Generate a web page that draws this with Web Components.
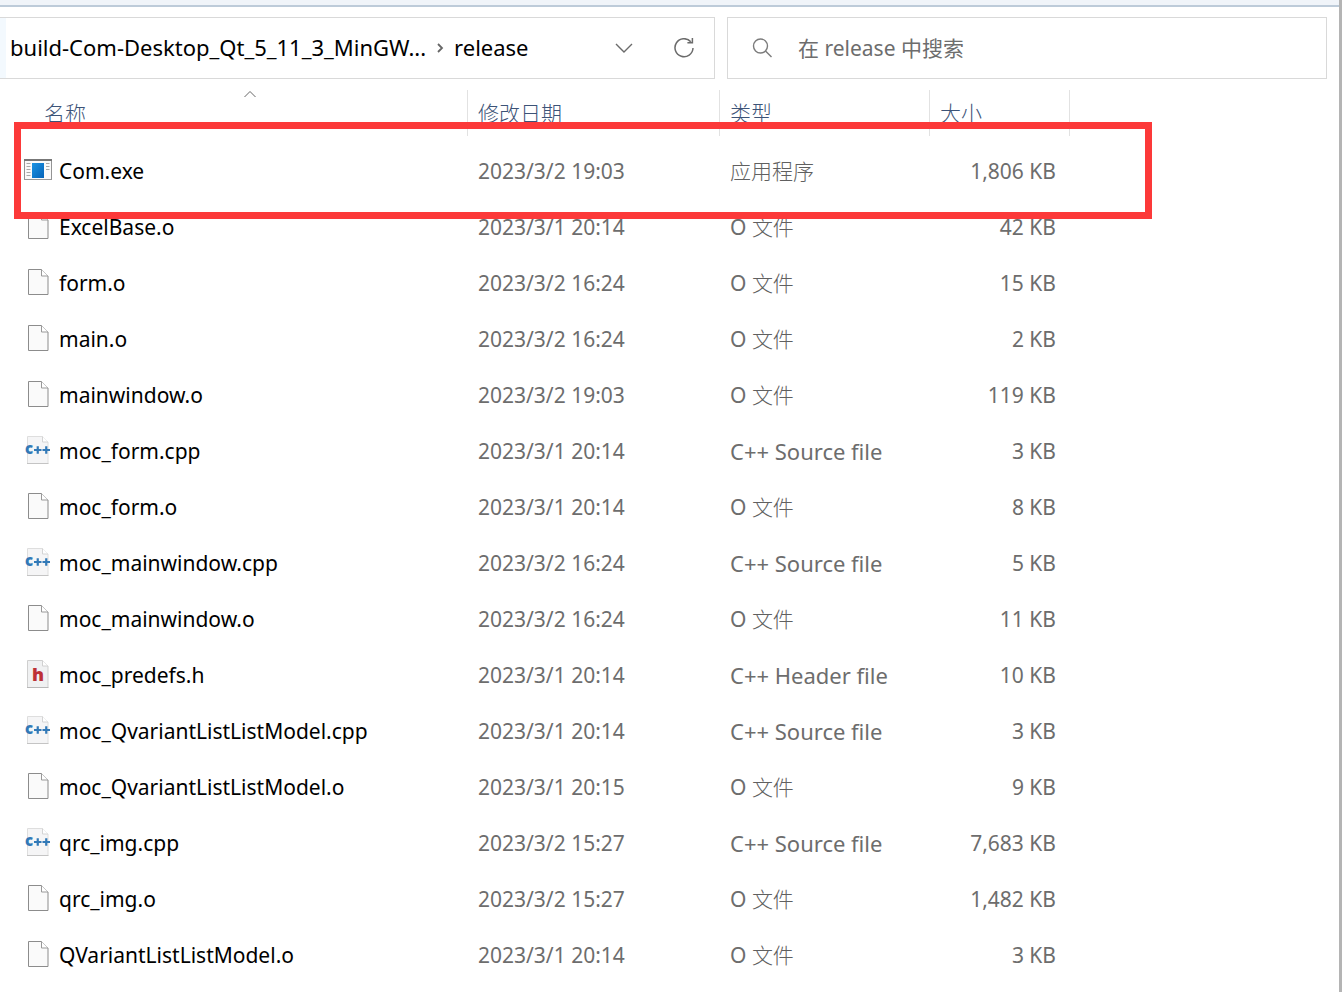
<!DOCTYPE html>
<html lang="zh-CN">
<head>
<meta charset="utf-8">
<title>release</title>
<style>
  html, body { margin: 0; min-height: 100%; background: #fff; }
  body { overflow-x: hidden; }
</style>
</head>
<body>
<explorer-window>
  <address-bar slot="address"></address-bar>
  <search-box slot="search" hint="在 release 中搜索"></search-box>
  <file-list></file-list>
</explorer-window>

<script>
const define = (name, html, setup) => {
  const template = document.createElement('template');
  template.innerHTML = html;
  customElements.define(name, class extends HTMLElement {
    connectedCallback() {
      if (this.shadowRoot) return;
      const root = this.attachShadow({ mode: 'open' });
      root.append(template.content.cloneNode(true));
      if (setup) setup(this, root);
    }
  });
};

const FILE_ICONS = {
  exe: `<svg width="28" height="22" viewBox="0 0 28 22">
    <defs><linearGradient id="b" x1="0" y1="0" x2="1" y2="1"><stop stop-color="#1b93e3"/><stop offset="1" stop-color="#0563b8"/></linearGradient></defs>
    <rect x=".5" y=".5" width="27" height="20" fill="#fafafa" stroke="#949494"/>
    <path d="M0 1h28" stroke="#777" stroke-width="2"/><path d="M0 20.500h28" stroke="#999"/>
    <path d="M2.500 4.500h4M2.500 7.500h4M2.500 10.500h4M2.500 13.500h4M2.500 16.500h4M22 4.500h3.500M22 7.500h3.500M22 10.500h3.500" stroke="#aaa"/>
    <rect x="8" y="4" width="12" height="15" fill="url(#b)"/></svg>`,
  o: `<svg width="28" height="28" viewBox="0 0 28 28">
    <path d="M4.500 1.500h13l6.500 6.500v18.500H4.500z" fill="#fafafa" stroke="#8c8c8c"/>
    <path d="M17.500 1.500v6.500h6.500" fill="#fff" stroke="#999"/></svg>`,
  cpp: `<svg width="28" height="28" viewBox="0 0 28 28">
    <path d="M3.500.5h15l5.500 5.500v21.500H3.500z" fill="#f5f5f6" stroke="#dedede"/>
    <path d="M3 27.500h21.500" stroke="#c4c4c4"/><path d="M18.500.5v5.500H24" fill="#fff" stroke="#d4d4d4"/>
    <text x="1" y="18" font-family="Open Sans" font-weight="800" font-size="15" fill="#3279b7">c</text>
    <path d="M10 14h7.500M13.750 10.250v7.500M18.500 14H26M22.250 10.250v7.500" stroke="#3279b7" stroke-width="2.200"/></svg>`,
  h: `<svg width="28" height="28" viewBox="0 0 28 28">
    <path d="M3.500.5h15l5.500 5.500v21.500H3.500z" fill="#f0f1f2" stroke="#cfcfcf"/>
    <path d="M3 27.500h21.500" stroke="#b8b8b8"/><path d="M18.500.5v5.500H24" fill="#fff" stroke="#d0d0d0"/>
    <text x="8" y="21" font-family="Open Sans" font-weight="800" font-size="18" fill="#bd3036">h</text></svg>`
};

define('file-icon', `
<style>
  :host { display: flex; flex: none; width: 28px; height: 28px; margin-bottom: 2px; align-items: center; justify-content: center; }
  svg { display: block; }
</style>`, (host, root) => {
  root.innerHTML += FILE_ICONS[host.getAttribute('type')];
});

define('explorer-window', `
<style>
  :host { display: block; box-sizing: border-box; height: 100vh; overflow: hidden; border-right: 3px solid #b4b4b4;
    font: 21px/28px "Noto Sans", "Noto Sans CJK SC", sans-serif; color: #000; background: #fff; }
  .strip { height: 5px; background: #f0f4f9; border-bottom: 2px solid #bdcbd9; }
  nav { display: grid; grid-template-columns: minmax(0, 715fr) minmax(0, 600fr); gap: 12px; padding: 10px 12px 11px 0; }
</style>
<div class="strip"></div>
<nav><slot name="address"></slot><slot name="search"></slot></nav>
<slot></slot>`);

define('address-bar', `
<style>
  :host { display: flex; align-items: center; box-sizing: border-box; height: 62px;
    border: 1px solid #d9d9d9; border-left: 0; padding-right: 20px; font-size: 22px; }
  .edge { align-self: stretch; flex: none; width: 6px; background: #f3f9fe; }
  button { border: 0; padding: 0 4px; background: none; font: inherit; color: inherit; white-space: nowrap; }
  .crumb { padding-bottom: 2px; }
  button svg { display: block; }
  .sep { flex: none; margin: 0 6px; }
  .tools { display: flex; margin-left: auto; gap: 40px; }
  .tools button { padding: 0; }
</style>
<span class="edge"></span>
<button class="crumb">build-Com-Desktop_Qt_5_11_3_MinGW...</button>
<svg class="sep" width="8" height="12" viewBox="0 0 8 12" fill="none" stroke="#666" stroke-width="1.800"><path d="M2 2l4 4-4 4"/></svg>
<button class="crumb">release</button>
<div class="tools">
  <button aria-label="历史记录"><svg width="20" height="20" viewBox="0 0 20 20" fill="none" stroke="#6b6b6b" stroke-width="1.400"><path d="M2 6l8 8 8-8"/></svg></button>
  <button aria-label="刷新"><svg width="20" height="20" viewBox="0 0 20 20" fill="none" stroke="#6b6b6b" stroke-width="1.500"><path d="M16.800 3.800A9 9 0 1 0 19 10M18.400 0v4.700h-5"/></svg></button>
</div>`);

define('search-box', `
<style>
  :host { display: flex; align-items: center; box-sizing: border-box; height: 62px;
    border: 1px solid #d9d9d9; padding: 0 24px; gap: 25px; }
  svg { flex: none; }
  input { flex: 1; min-width: 0; height: 32px; border: 0; padding: 0; outline: 0; background: none; font: inherit; }
  input::placeholder { color: #6d6d6d; opacity: 1; }
</style>
<svg width="21" height="20" viewBox="0 0 21 20" fill="none" stroke="#7c7c7c" stroke-width="1.400"><circle cx="8.500" cy="8" r="7"/><path d="M13.500 13l6 6"/></svg>
<input type="search">`, (host, root) => {
  const input = root.querySelector('input');
  input.placeholder = host.getAttribute('hint');
  input.setAttribute('aria-label', host.getAttribute('hint'));
});

define('highlight-frame', `
<style>
  :host { display: block; box-sizing: border-box; border: 7px solid #fc3939; pointer-events: none; }
</style>`);

const FILES = [
  ['Com.exe', '2023/3/2 19:03', '1,806'],
  ['ExcelBase.o', '2023/3/1 20:14', '42'],
  ['form.o', '2023/3/2 16:24', '15'],
  ['main.o', '2023/3/2 16:24', '2'],
  ['mainwindow.o', '2023/3/2 19:03', '119'],
  ['moc_form.cpp', '2023/3/1 20:14', '3'],
  ['moc_form.o', '2023/3/1 20:14', '8'],
  ['moc_mainwindow.cpp', '2023/3/2 16:24', '5'],
  ['moc_mainwindow.o', '2023/3/2 16:24', '11'],
  ['moc_predefs.h', '2023/3/1 20:14', '10'],
  ['moc_QvariantListListModel.cpp', '2023/3/1 20:14', '3'],
  ['moc_QvariantListListModel.o', '2023/3/1 20:15', '9'],
  ['qrc_img.cpp', '2023/3/2 15:27', '7,683'],
  ['qrc_img.o', '2023/3/2 15:27', '1,482'],
  ['QVariantListListModel.o', '2023/3/1 20:14', '3']
];
const KINDS = {
  exe: '<span class="cjk">应用程序</span>',
  o: 'O <span class="cjk">文件</span>',
  cpp: '<span class="wide">C++ Source file</span>',
  h: '<span class="wide">C++ Header file</span>'
};

define('file-list', `
<style>
  :host { display: block; position: relative; }
  table { border-collapse: separate; border-spacing: 0; table-layout: fixed; width: 1070px; }
  .name { width: 468px; } .date { width: 252px; } .type { width: 210px; } .size { width: 140px; }
  th { position: relative; height: 46px; padding: 0 0 0 10px; box-sizing: border-box; border-right: 1px solid #e2e2e2; text-align: left; font-weight: 300; }
  th:first-child { padding-left: 44px; }
  th button { border: 0; padding: 0; background: none; font: inherit; color: #3c5377; display: block; }
  th svg { position: absolute; top: 0; left: 50%; margin-left: 10px; }
  tbody::before { content: ""; display: block; height: 7px; }
  td { height: 56px; padding: 0 0 0 10px; color: #6d6d6d; white-space: nowrap; }
  td:first-child { padding-left: 24px; color: #000; }
  td:last-child { padding-right: 14px; text-align: right; }
  .cjk { font-weight: 300; color: #606060; }
  .wide { font-size: 22px; }
  .file { display: flex; align-items: center; gap: 7px; }
  highlight-frame { position: absolute; left: 14px; top: 32px; width: 1138px; height: 97px; }
</style>
<table>
  <colgroup><col class="name"><col class="date"><col class="type"><col class="size"></colgroup>
  <thead><tr>
    <th aria-sort="ascending"><button>名称</button><svg width="12" height="8" viewBox="0 0 12 8" fill="none" stroke="#666"><path d="M.5 7L6 1.500 11.500 7"/></svg></th>
    <th><button>修改日期</button></th><th><button>类型</button></th><th><button>大小</button></th>
  </tr></thead>
  <tbody></tbody>
</table>
<highlight-frame></highlight-frame>`, (host, root) => {
  root.querySelector('tbody').innerHTML = FILES.map(([name, date, size]) => {
    const ext = name.split('.').pop();
    return `<tr><td><div class="file"><file-icon type="${ext}"></file-icon><span>${name}</span></div></td><td>${date}</td><td>${KINDS[ext]}</td><td>${size} KB</td></tr>`;
  }).join('');
});
</script>
</body>
</html>
